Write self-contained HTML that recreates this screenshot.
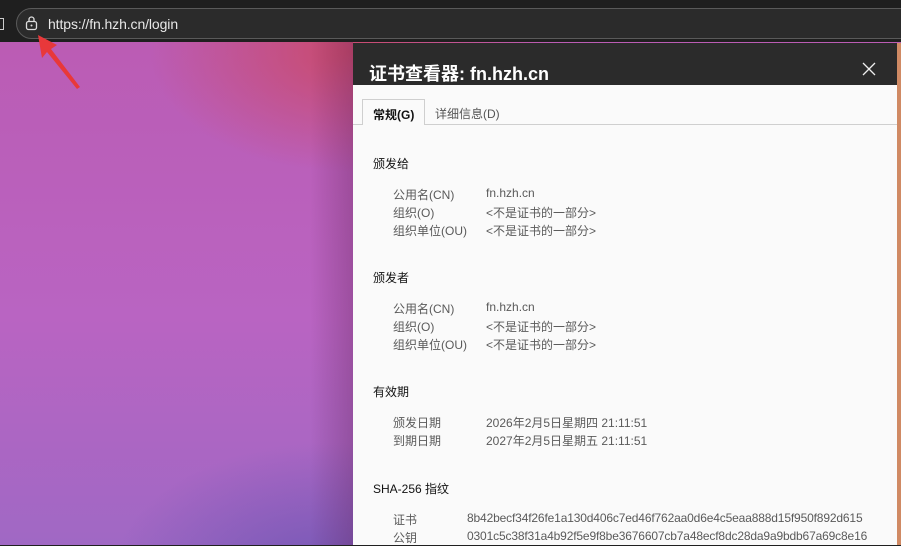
<!DOCTYPE html>
<html><head><meta charset="utf-8"><style>
*{margin:0;padding:0;box-sizing:border-box}
body{width:901px;height:545px;overflow:hidden;position:relative;font-family:"Liberation Sans","Noto Sans CJK SC",sans-serif;background:#202020}
.bg{position:absolute;left:0;top:42px;width:901px;height:503px;
background:
radial-gradient(ellipse 200px 120px at 350px 10px,rgba(205,70,90,.8),rgba(205,70,90,0) 100%),
radial-gradient(ellipse 220px 140px at 330px 540px,rgba(100,80,175,.75),rgba(100,80,175,0) 100%),
linear-gradient(180deg,#bb5cb4 0%,#b964c2 55%,#a068c4 100%);}
.shade{position:absolute;left:310px;top:42px;width:43px;height:503px;background:linear-gradient(90deg,rgba(80,30,80,0),rgba(90,30,80,.3))}
.top{position:absolute;left:0;top:0;width:901px;height:42px;background:#1f1f1f}
.addr{position:absolute;left:16px;top:8px;width:900px;height:31px;border:1px solid #5a5a5a;border-radius:16px;background:#2b2b2b}
.url{position:absolute;left:48px;top:16px;color:#e8e8e8;font-size:14px;letter-spacing:-0.1px}
.dlg{position:absolute;left:353px;top:43px;width:544px;height:502px;background:#fafafa}
.tb{position:absolute;left:0;top:0;width:544px;height:42px;background:#2b2b2b}
.title{position:absolute;left:16px;top:17px;color:#fff;font-size:18px;font-weight:bold}
.strip{position:absolute;left:897px;top:43px;width:4px;height:502px;background:#d08a64}
.tabline{position:absolute;left:0;top:81px;width:544px;height:1px;background:#cfcfcf}
.tab1{position:absolute;left:9px;top:56px;width:63px;height:26px;border:1px solid #cfcfcf;border-bottom:none;background:#fafafa;font-size:12px;font-weight:bold;color:#111;padding:6px 0 0 10px}
.tab2{position:absolute;left:82px;top:62px;font-size:12px;color:#555}
.t{position:absolute;font-size:12px;color:#5a5a5a;white-space:nowrap}
.h{position:absolute;font-size:12px;color:#111;white-space:nowrap}
.x{letter-spacing:-0.15px}
</style></head><body>
<div class="top"></div>
<div class="addr"></div>
<svg style="position:absolute;left:24px;top:15px" width="16" height="16" viewBox="0 0 16 16"><rect x="2.5" y="6.5" width="10" height="8" rx="2" fill="none" stroke="#ddd" stroke-width="1.3"/><path d="M5 6.5V4.5a2.5 2.5 0 0 1 5 0v2" fill="none" stroke="#ddd" stroke-width="1.3"/><circle cx="7.5" cy="10.5" r="1" fill="#ddd"/></svg>
<div style="position:absolute;left:0;top:18px;width:4px;height:12px;border:1px solid #ccc;border-left:none"></div>
<div class="url">https://fn.hzh.cn/login</div>
<div class="bg"></div>
<div class="shade"></div>
<svg style="position:absolute;left:30px;top:32px" width="60" height="60"><polygon points="8,3 27,13 21,17 50,55 47,57 17,20 12,26" fill="#e8383a"/></svg>
<div class="dlg">
<div class="tb"><div class="title">证书查看器: fn.hzh.cn</div>
<svg style="position:absolute;left:509px;top:19px" width="14" height="14"><path d="M1 1L13 13M13 1L1 13" stroke="#eee" stroke-width="1.3"/></svg></div>
<div class="tabline"></div>
<div class="tab1">常规(G)</div>
<div class="tab2">详细信息(D)</div>
</div>
<div class="strip"></div>
<div class="h" style="left:373px;top:155px">颁发给</div>
<div class="t" style="left:393px;top:186px">公用名(CN)</div><div class="t" style="left:486px;top:186px">fn.hzh.cn</div>
<div class="t" style="left:393px;top:204px">组织(O)</div><div class="t" style="left:486px;top:204px">&lt;不是证书的一部分&gt;</div>
<div class="t" style="left:393px;top:222px">组织单位(OU)</div><div class="t" style="left:486px;top:222px">&lt;不是证书的一部分&gt;</div>
<div class="h" style="left:373px;top:269px">颁发者</div>
<div class="t" style="left:393px;top:300px">公用名(CN)</div><div class="t" style="left:486px;top:300px">fn.hzh.cn</div>
<div class="t" style="left:393px;top:318px">组织(O)</div><div class="t" style="left:486px;top:318px">&lt;不是证书的一部分&gt;</div>
<div class="t" style="left:393px;top:336px">组织单位(OU)</div><div class="t" style="left:486px;top:336px">&lt;不是证书的一部分&gt;</div>
<div class="h" style="left:373px;top:383px">有效期</div>
<div class="t" style="left:393px;top:414px">颁发日期</div><div class="t" style="left:486px;top:414px">2026年2月5日星期四 21:11:51</div>
<div class="t" style="left:393px;top:432px">到期日期</div><div class="t" style="left:486px;top:432px">2027年2月5日星期五 21:11:51</div>
<div class="h" style="left:373px;top:480px">SHA-256 指纹</div>
<div class="t" style="left:393px;top:511px">证书</div><div class="t x" style="left:467px;top:511px">8b42becf34f26fe1a130d406c7ed46f762aa0d6e4c5eaa888d15f950f892d615</div>
<div class="t" style="left:393px;top:529px">公钥</div><div class="t x" style="left:467px;top:529px">0301c5c38f31a4b92f5e9f8be3676607cb7a48ecf8dc28da9a9bdb67a69c8e16</div>
</body></html>
